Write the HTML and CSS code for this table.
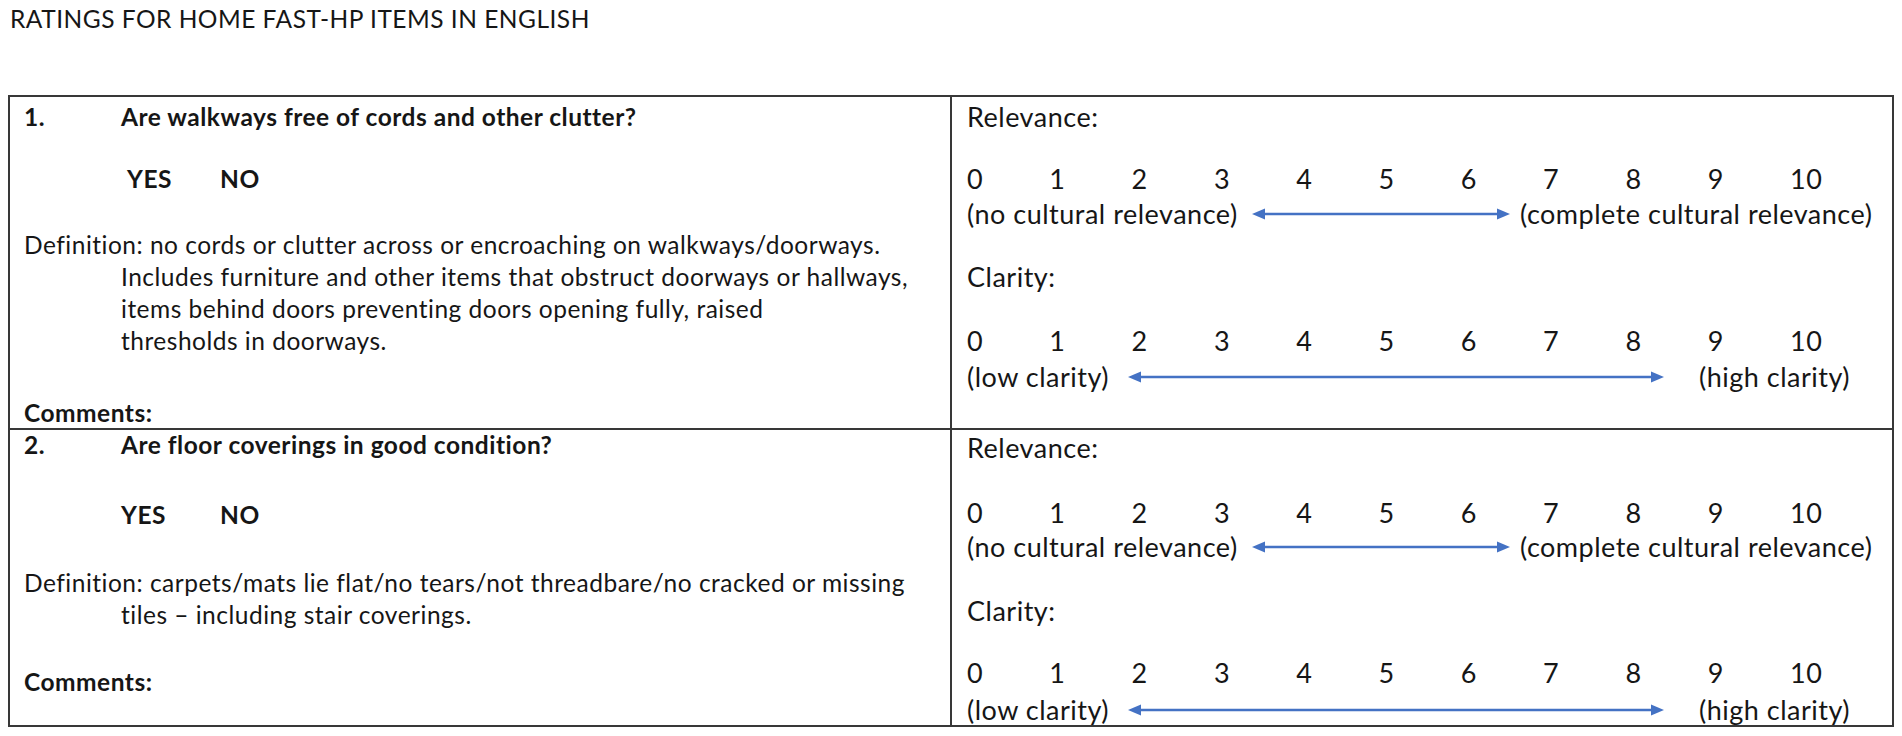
FILE: index.html
```html
<!DOCTYPE html>
<html lang="en">
<head>
<meta charset="utf-8">
<title>Ratings for Home FAST-HP items in English</title>
<link rel="stylesheet" href="styles.css">
</head>
<body>
<div class="page">
  <h1 class="title">RATINGS FOR HOME FAST-HP ITEMS IN ENGLISH</h1>

  <div class="sheet">
    <div class="item item-1">
      <div class="cell left">
        <div class="line q"><span class="num">1.</span><span>Are walkways free of cords and other clutter?</span></div>
        <div class="line yn yn-1"><span class="yes">YES</span><span>NO</span></div>
        <div class="def def-1">
          <div class="dline">Definition: no cords or clutter across or encroaching on walkways/doorways.</div>
          <div class="dline indent">Includes furniture and other items that obstruct doorways or hallways,</div>
          <div class="dline indent">items behind doors preventing doors opening fully, raised</div>
          <div class="dline indent">thresholds in doorways.</div>
        </div>
        <div class="line comments comments-1">Comments:</div>
      </div>
      <div class="cell right">
        <div class="line lbl rel">Relevance:</div>
        <div class="line scale sc-a"><span>0</span><span>1</span><span>2</span><span>3</span><span>4</span><span>5</span><span>6</span><span>7</span><span>8</span><span>9</span><span>10</span></div>
        <div class="line ends ends-a">
          <span class="from from-rel">(no cultural relevance)</span>
          <svg class="arrow" width="258" height="14" viewBox="0 0 258 14"><line x1="10" y1="7" x2="248" y2="7" stroke="#4472c4" stroke-width="2.6"/><polygon points="0,7 13,1.5 13,12.5" fill="#4472c4"/><polygon points="258,7 245,1.5 245,12.5" fill="#4472c4"/></svg>
          <span class="to to-rel">(complete cultural relevance)</span>
        </div>
        <div class="line lbl clar">Clarity:</div>
        <div class="line scale sc-b"><span>0</span><span>1</span><span>2</span><span>3</span><span>4</span><span>5</span><span>6</span><span>7</span><span>8</span><span>9</span><span>10</span></div>
        <div class="line ends ends-b">
          <span class="from from-clar">(low clarity)</span>
          <svg class="arrow" width="536" height="14" viewBox="0 0 536 14"><line x1="10" y1="7" x2="526" y2="7" stroke="#4472c4" stroke-width="2.6"/><polygon points="0,7 13,1.5 13,12.5" fill="#4472c4"/><polygon points="536,7 523,1.5 523,12.5" fill="#4472c4"/></svg>
          <span class="to to-clar">(high clarity)</span>
        </div>
      </div>
    </div>

    <div class="item item-2">
      <div class="cell left">
        <div class="line q"><span class="num">2.</span><span>Are floor coverings in good condition?</span></div>
        <div class="line yn yn-2"><span class="yes">YES</span><span>NO</span></div>
        <div class="def def-2">
          <div class="dline">Definition: carpets/mats lie flat/no tears/not threadbare/no cracked or missing</div>
          <div class="dline indent">tiles – including stair coverings.</div>
        </div>
        <div class="line comments comments-2">Comments:</div>
      </div>
      <div class="cell right">
        <div class="line lbl rel">Relevance:</div>
        <div class="line scale sc-a"><span>0</span><span>1</span><span>2</span><span>3</span><span>4</span><span>5</span><span>6</span><span>7</span><span>8</span><span>9</span><span>10</span></div>
        <div class="line ends ends-a">
          <span class="from from-rel">(no cultural relevance)</span>
          <svg class="arrow" width="258" height="14" viewBox="0 0 258 14"><line x1="10" y1="7" x2="248" y2="7" stroke="#4472c4" stroke-width="2.6"/><polygon points="0,7 13,1.5 13,12.5" fill="#4472c4"/><polygon points="258,7 245,1.5 245,12.5" fill="#4472c4"/></svg>
          <span class="to to-rel">(complete cultural relevance)</span>
        </div>
        <div class="line lbl clar">Clarity:</div>
        <div class="line scale sc-b"><span>0</span><span>1</span><span>2</span><span>3</span><span>4</span><span>5</span><span>6</span><span>7</span><span>8</span><span>9</span><span>10</span></div>
        <div class="line ends ends-b">
          <span class="from from-clar">(low clarity)</span>
          <svg class="arrow" width="536" height="14" viewBox="0 0 536 14"><line x1="10" y1="7" x2="526" y2="7" stroke="#4472c4" stroke-width="2.6"/><polygon points="0,7 13,1.5 13,12.5" fill="#4472c4"/><polygon points="536,7 523,1.5 523,12.5" fill="#4472c4"/></svg>
          <span class="to to-clar">(high clarity)</span>
        </div>
      </div>
    </div>
  </div>
</div>
</body>
</html>
```

FILE: styles.css
```css
* { box-sizing: border-box; }

html, body {
  margin: 0;
  padding: 0;
  background: #ffffff;
}

body {
  font-family: Lato, "Liberation Sans", sans-serif;
  font-size: 24.5px;
  letter-spacing: 0.5px;
  color: #161616;
}

.page {
  padding: 4px 0 0 8px;
}

.title {
  margin: 0;
  padding-left: 2px;
  font-size: 24.5px;
  font-weight: 400;
  line-height: 30px;
  white-space: nowrap;
}

.sheet {
  margin-top: 61px;
  width: 1886px;
  border: 2px solid #383838;
  border-bottom: none;
}

.item {
  display: grid;
  grid-template-columns: 942px 1fr;
  border-bottom: 2px solid #383838;
}

.cell {
  display: flex;
  flex-direction: column;
  white-space: nowrap;
}

.left {
  border-right: 2px solid #383838;
  padding-left: 14px;
}

.right {
  padding-left: 15px;
  font-size: 27px;
}

.line {
  line-height: 30px;
  height: 30px;
}

.q, .yn, .comments {
  font-weight: 700;
}

.q {
  display: flex;
}

.num {
  width: 97px;
  flex: none;
}

.yn {
  display: flex;
  padding-left: 97px;
}

.yn .yes {
  width: 99px;
}

.yn-1 .yes {
  margin-left: 6px;
  width: 93px;
}

.def .dline {
  line-height: 32px;
  height: 32px;
}

.dline.indent {
  padding-left: 97px;
}

/* vertical rhythm: item 1 */
.item-1 .left { padding-top: 5px; }
.item-1 .yn { margin-top: 32px; }
.def-1 { margin-top: 35px; }
.comments-1 { margin-top: 41px; }

.item-1 .right { padding-top: 5px; }
.item-1 .sc-a { margin-top: 32px; }
.item-1 .ends-a { margin-top: 5px; }
.item-1 .clar { margin-top: 33px; }
.item-1 .sc-b { margin-top: 34px; }
.item-1 .ends-b { margin-top: 6px; }

/* vertical rhythm: item 2 */
.item-2 .left { padding-top: 0; }
.item-2 .q { margin-top: 0; }
.item-2 .yn { margin-top: 40px; }
.def-2 { margin-top: 37px; }
.comments-2 { margin-top: 36px; }

.item-2 .right { padding-top: 3px; }
.item-2 .sc-a { margin-top: 35px; }
.item-2 .ends-a { margin-top: 4px; }
.item-2 .clar { margin-top: 34px; }
.item-2 .sc-b { margin-top: 32px; }
.item-2 .ends-b { margin-top: 7px; }

.scale {
  display: flex;
}

.scale span {
  width: 82.3px;
  flex: none;
}

.ends {
  display: flex;
  align-items: center;
}

.arrow {
  flex: none;
  display: block;
}

.from-rel { width: 285px; flex: none; }
.to-rel { margin-left: 10px; }

.from-clar { width: 161px; flex: none; }
.to-clar { margin-left: 35px; }
```
